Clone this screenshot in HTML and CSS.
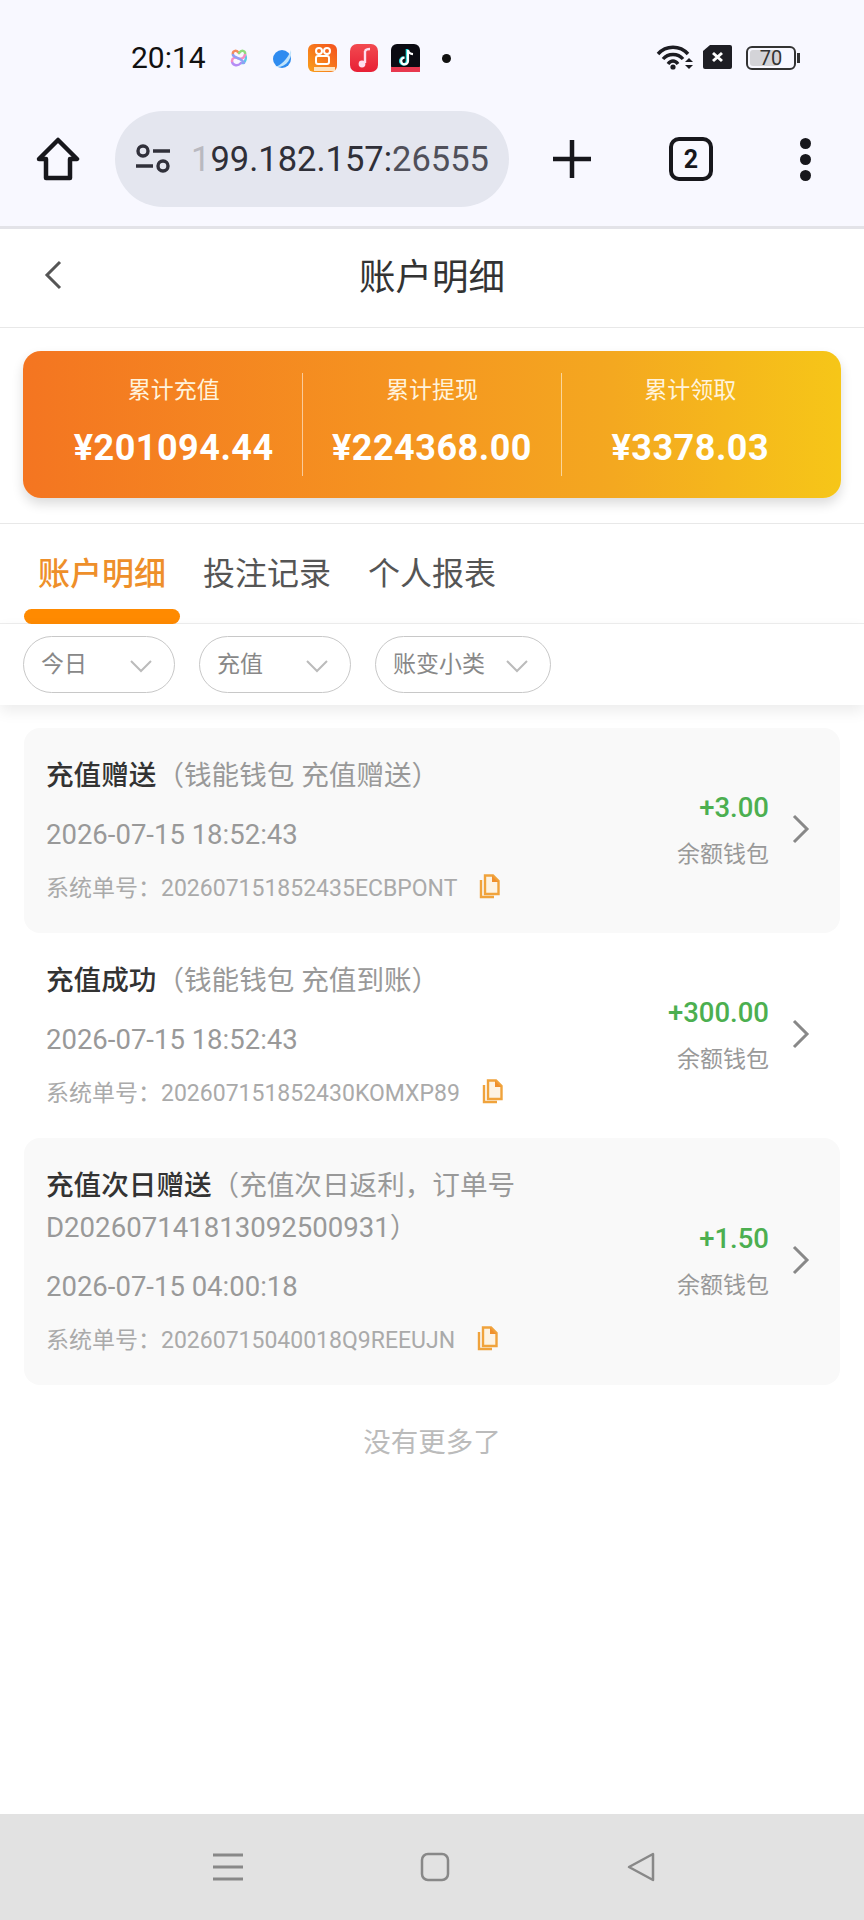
FILE: index.html
```html
<!DOCTYPE html>
<html lang="zh-CN">
<head>
    <meta charset="UTF-8">
    <meta name="viewport" content="width=device-width, initial-scale=1.0">
    <title>账户明细</title>
    <link rel="stylesheet" href="styles.css">
</head>
<body>
    <div class="browser">
        <div class="status-bar">
            <span class="clock">20:14</span>
            <svg class="app app-a" viewBox="0 0 20 20" fill="none" stroke-width="2.400" stroke-linecap="round">
                <path d="M4 7C3 3 7 1 10 5" stroke="#f48a5c"/>
                <path d="M10 5C13 1 17 3 16 7" stroke="#8fdc7a"/>
                <path d="M16 7C18 10 16 16 12 15" stroke="#5cc8e8"/>
                <path d="M12 15C8 19 3 17 3 13" stroke="#b58cf5"/>
                <path d="M3 13C3 10 6 9 8 10S14 12 16 7" stroke="#f78fc3"/>
                <path d="M4 7C5 10 13 10 15 15" stroke="#8f9ff5"/>
            </svg>
            <svg class="app app-b" viewBox="0 0 22 22">
                <circle cx="11" cy="11" r="9" fill="#2f8cf0"/>
                <path d="M4 19C9 18 17 11 20 2 21 10 16 20 4 19Z" fill="#bfe3fb"/>
            </svg>
            <svg class="app app-c" viewBox="0 0 29 28">
                <defs>
                    <linearGradient id="kuai" x1="0" y1="1" x2="1" y2="0">
                        <stop offset="0" stop-color="#f9a01b"/>
                        <stop offset="1" stop-color="#f4511e"/>
                    </linearGradient>
                </defs>
                <rect width="29" height="28" rx="6" fill="url(#kuai)"/>
                <g fill="none" stroke="#fff" stroke-width="2">
                    <circle cx="11" cy="7" r="3"/>
                    <circle cx="19" cy="7" r="3"/>
                    <rect x="8" y="12" width="13" height="8" rx="2"/>
                </g>
                <rect x="6" y="23" width="21" height="4" fill="#fde3c0"/>
            </svg>
            <svg class="app app-d" viewBox="0 0 28 28">
                <defs>
                    <linearGradient id="yinyue" x1="0" y1="0" x2="0" y2="1">
                        <stop offset="0" stop-color="#f24a50"/>
                        <stop offset="1" stop-color="#e81f35"/>
                    </linearGradient>
                </defs>
                <rect width="28" height="28" rx="7" fill="url(#yinyue)"/>
                <path d="M15 7v12" stroke="#fde" stroke-width="2.400" fill="none"/>
                <path d="M15 7c1-2 3-2 5-2" stroke="#fde" stroke-width="2.400" fill="none"/>
                <circle cx="12" cy="20" r="3.400" fill="#fde"/>
            </svg>
            <svg class="app app-e" viewBox="0 0 29 28">
                <rect width="29" height="28" rx="6" fill="#0b0b12"/>
                <path d="M16 5v12a3.400 3.400 0 1 1-3.400-3.400" fill="none" stroke="#25e0e0" stroke-width="2.600"/>
                <path d="M17 6c.6 2.500 2.400 4 5 4.200M17 6v11a3.400 3.400 0 1 1-3.400-3.400" fill="none" stroke="#fff" stroke-width="2.200"/>
                <rect y="23" width="29" height="5" fill="#e8384f"/>
            </svg>
            <span class="notice-dot"></span>
            <span class="status-right">
                <svg class="wifi" viewBox="0 0 38 26" fill="none" stroke="#1c1c22" stroke-width="3.400">
                    <path d="M2 10C10 1 24 1 32 10"/>
                    <path d="M7 15C12 9 22 9 27 15"/>
                    <path d="M12 20C15 16 19 16 22 20"/>
                    <circle cx="17" cy="23" r="2.600" fill="#1c1c22" stroke="none"/>
                    <path d="M29 18l4-4 4 4zM29 21h8l-4 4z" fill="#1c1c22" stroke="none"/>
                </svg>
                <svg class="sim" viewBox="0 0 29 24">
                    <path d="M7 0H27a2 2 0 0 1 2 2V22a2 2 0 0 1-2 2H2a2 2 0 0 1-2-2V6Z" fill="#1e1e24"/>
                    <path d="M10 8l9 8M19 8l-9 8" stroke="#fff" stroke-width="3"/>
                </svg>
                <span class="battery"><span class="battery-fill"></span><span class="battery-num">70</span></span>
                <span class="battery-nub"></span>
            </span>
        </div>
        <div class="toolbar">
            <svg class="home" viewBox="0 0 44 44" fill="none" stroke="#17171c" stroke-width="4.500" stroke-linejoin="round">
                <path d="M22 3 41 22H34V41H10V22H3Z"/>
            </svg>
            <div class="url-pill">
                <svg class="site-info" viewBox="0 0 36 30" fill="none" stroke="#30303a" stroke-width="3.400">
                    <circle cx="8" cy="7" r="5"/>
                    <path d="M18 7H35"/>
                    <path d="M1 22H18"/>
                    <circle cx="28" cy="22" r="5"/>
                </svg>
                <span class="url"><span class="url-fade">1</span>99.182.157:<span class="url-port">26555</span></span>
            </div>
            <svg class="plus" viewBox="0 0 40 40" stroke="#17171c" stroke-width="4.500">
                <path d="M20 1V39M1 20H39"/>
            </svg>
            <span class="tab-count">2</span>
            <span class="more"><i></i><i></i><i></i></span>
        </div>
    </div>

    <div class="page-head">
        <svg class="back" viewBox="0 0 18 30" fill="none" stroke="#555" stroke-width="3">
            <path d="M16 2 3 15 16 28"/>
        </svg>
        <h1>账户明细</h1>
    </div>

    <div class="summary">
        <div class="summary-card">
            <div class="summary-cell">
                <div class="summary-label">累计充值</div>
                <div class="summary-value">¥201094.44</div>
            </div>
            <div class="summary-cell">
                <div class="summary-label">累计提现</div>
                <div class="summary-value">¥224368.00</div>
            </div>
            <div class="summary-cell">
                <div class="summary-label">累计领取</div>
                <div class="summary-value">¥3378.03</div>
            </div>
        </div>
    </div>

    <div class="tabs">
        <div class="tab active">账户明细<span class="tab-bar"></span></div>
        <div class="tab">投注记录</div>
        <div class="tab">个人报表</div>
    </div>

    <div class="filters">
        <div class="filter"><span>今日</span>
            <svg viewBox="0 0 24 14" fill="none" stroke="#bbb" stroke-width="2"><path d="M2 2 12 12 22 2"/></svg>
        </div>
        <div class="filter"><span>充值</span>
            <svg viewBox="0 0 24 14" fill="none" stroke="#bbb" stroke-width="2"><path d="M2 2 12 12 22 2"/></svg>
        </div>
        <div class="filter filter-wide"><span>账变小类</span>
            <svg viewBox="0 0 24 14" fill="none" stroke="#bbb" stroke-width="2"><path d="M2 2 12 12 22 2"/></svg>
        </div>
    </div>

    <div class="records">
        <div class="record shaded">
            <div class="record-main">
                <div class="record-title"><b>充值赠送</b>（钱能钱包 充值赠送）</div>
                <div class="record-time">2026-07-15 18:52:43</div>
                <div class="record-order">系统单号：202607151852435ECBPONT
                    <svg class="copy" viewBox="0 0 21 25"><use href="#copy-icon"/></svg>
                </div>
            </div>
            <div class="record-side">
                <div class="record-amount">+3.00</div>
                <div class="record-wallet">余额钱包</div>
            </div>
            <svg class="record-arrow" viewBox="0 0 18 30" fill="none" stroke="#888" stroke-width="3"><path d="M2 2 15 15 2 28"/></svg>
        </div>
        <div class="record">
            <div class="record-main">
                <div class="record-title"><b>充值成功</b>（钱能钱包 充值到账）</div>
                <div class="record-time">2026-07-15 18:52:43</div>
                <div class="record-order">系统单号：202607151852430KOMXP89
                    <svg class="copy" viewBox="0 0 21 25"><use href="#copy-icon"/></svg>
                </div>
            </div>
            <div class="record-side">
                <div class="record-amount">+300.00</div>
                <div class="record-wallet">余额钱包</div>
            </div>
            <svg class="record-arrow" viewBox="0 0 18 30" fill="none" stroke="#888" stroke-width="3"><path d="M2 2 15 15 2 28"/></svg>
        </div>
        <div class="record shaded">
            <div class="record-main">
                <div class="record-title"><b>充值次日赠送</b>（充值次日返利，订单号D202607141813092500931）</div>
                <div class="record-time">2026-07-15 04:00:18</div>
                <div class="record-order">系统单号：20260715040018Q9REEUJN
                    <svg class="copy" viewBox="0 0 21 25"><use href="#copy-icon"/></svg>
                </div>
            </div>
            <div class="record-side">
                <div class="record-amount">+1.50</div>
                <div class="record-wallet">余额钱包</div>
            </div>
            <svg class="record-arrow" viewBox="0 0 18 30" fill="none" stroke="#888" stroke-width="3"><path d="M2 2 15 15 2 28"/></svg>
        </div>
        <div class="no-more">没有更多了</div>
    </div>

    <div class="nav-bar">
        <svg class="nav-menu" viewBox="0 0 30 28" stroke="#888" stroke-width="3"><path d="M0 2H30M0 14H30M0 26H30"/></svg>
        <svg class="nav-home" viewBox="0 0 30 30" fill="none" stroke="#888" stroke-width="2.500"><rect x="2" y="2" width="26" height="26" rx="6"/></svg>
        <svg class="nav-back" viewBox="0 0 28 30" fill="none" stroke="#888" stroke-width="2.500" stroke-linejoin="round"><path d="M26 2V28L2 15Z"/></svg>
    </div>

    <!-- 复制图标 -->
    <svg class="icon-defs" width="0" height="0">
        <symbol id="copy-icon" viewBox="0 0 21 25">
            <path d="M2 6V23H15" fill="none" stroke="#f0a33c" stroke-width="2.400"/>
            <path d="M6 1.500H14L19.500 7V20H6Z" fill="#fdf3e3" stroke="#f0a33c" stroke-width="2.400"/>
            <path d="M13 1.500 19.500 8H13Z" fill="#f0902c"/>
        </symbol>
    </svg>
</body>
</html>
```

FILE: styles.css
```css
* {
    box-sizing: border-box;
}
body {
    margin: 0;
    width: 864px;
    height: 1920px;
    display: flex;
    flex-direction: column;
    background-color: #fff;
    color: #333;
    font-family: Roboto, "Noto Sans CJK SC", sans-serif;
    overflow: hidden;
}

/* 浏览器顶部 */
.browser {
    height: 229px;
    background-color: #f8f8ff;
    border-bottom: 3px solid #e3e3e8;
    flex-shrink: 0;
}
.status-bar {
    height: 111px;
    padding: 44px 64px 0 131px;
    display: flex;
    align-items: flex-start;
}
.clock {
    width: 76px;
    height: 28px;
    line-height: 28px;
    font-size: 30px;
    color: #111;
    white-space: nowrap;
}
.app {
    display: block;
}
.app-a {
    width: 20px;
    height: 20px;
    margin: 4px 0 0 22px;
}
.app-b {
    width: 22px;
    height: 22px;
    margin: 4px 0 0 22px;
}
.app-c {
    width: 29px;
    height: 28px;
    margin-left: 15px;
}
.app-d {
    width: 28px;
    height: 28px;
    margin-left: 13px;
}
.app-e {
    width: 29px;
    height: 28px;
    margin-left: 13px;
}
.notice-dot {
    width: 9px;
    height: 9px;
    margin: 10px 0 0 22px;
    border-radius: 50%;
    background-color: #111;
}
.status-right {
    margin-left: auto;
    display: flex;
    align-items: flex-start;
}
.wifi {
    width: 38px;
    height: 26px;
}
.sim {
    width: 29px;
    height: 24px;
    margin: 1px 0 0 9px;
}
.battery {
    width: 50px;
    height: 24px;
    margin: 2px 0 0 14px;
    padding: 2px;
    display: flex;
    border: 2px solid #333;
    border-radius: 6px;
    background-color: #f8f8ff;
    position: relative;
}
.battery-fill {
    width: 70%;
    height: 100%;
    border-radius: 3px;
    background-color: #d4d4d8;
}
.battery-num {
    position: absolute;
    left: 0;
    right: 0;
    top: -2px;
    line-height: 24px;
    text-align: center;
    font-size: 20px;
    color: #333;
}
.battery-nub {
    width: 3px;
    height: 10px;
    margin: 9px 0 0 1px;
    background-color: #333;
}
.toolbar {
    height: 96px;
    padding-left: 36px;
    display: flex;
    align-items: center;
}
.home {
    width: 44px;
    height: 44px;
}
.url-pill {
    width: 394px;
    height: 96px;
    margin-left: 35px;
    padding-left: 20px;
    display: flex;
    align-items: center;
    border-radius: 48px;
    background-color: #e4e6ef;
    overflow: hidden;
}
.site-info {
    width: 36px;
    height: 30px;
    flex-shrink: 0;
}
.url {
    margin-left: 20px;
    font-size: 34.500px;
    color: #2f2f38;
    white-space: nowrap;
}
.url-fade {
    color: #b9b9c0;
}
.url-port {
    color: #50505a;
}
.plus {
    width: 40px;
    height: 40px;
    margin-left: 43px;
}
.tab-count {
    width: 44px;
    height: 44px;
    margin-left: 77px;
    display: flex;
    align-items: center;
    justify-content: center;
    border: 4px solid #17171c;
    border-radius: 10px;
    font-size: 25px;
    font-weight: 700;
    color: #17171c;
}
.more {
    margin-left: 87px;
    display: flex;
    flex-direction: column;
    gap: 5px;
}
.more i {
    width: 11px;
    height: 11px;
    border-radius: 50%;
    background-color: #17171c;
}

/* 页面标题 */
.page-head {
    height: 99px;
    flex-shrink: 0;
    padding-bottom: 8px;
    display: flex;
    align-items: center;
    justify-content: center;
    border-bottom: 1px solid #e8e8e8;
    position: relative;
}
.page-head h1 {
    margin: 0;
    font-size: 36.500px;
    font-weight: 400;
    color: #333;
}
.back {
    position: absolute;
    left: 44px;
    top: 31px;
    width: 18px;
    height: 30px;
}

/* 汇总卡片 */
.summary {
    height: 196px;
    flex-shrink: 0;
    padding: 23px 23px 0;
    border-bottom: 1px solid #e8e8e8;
}
.summary-card {
    height: 147px;
    padding: 22px;
    display: flex;
    border-radius: 18px;
    background: linear-gradient(90deg, #f47521 0%, #f59720 50%, #f4a820 72%, #f6c618 100%);
    box-shadow: 0 6px 12px rgba(0, 0, 0, 0.14);
    color: #fff;
}
.summary-cell {
    flex: 1;
    text-align: center;
    border-left: 1px solid rgba(255, 255, 255, 0.55);
}
.summary-cell:first-child {
    border-left: none;
}
.summary-label {
    height: 36px;
    line-height: 36px;
    font-size: 23px;
    color: #fff3dc;
}
.summary-value {
    margin-top: 17px;
    line-height: 44px;
    font-size: 36px;
    font-weight: 700;
    letter-spacing: 0.5px;
    white-space: nowrap;
}

/* 标签页 */
.tabs {
    height: 100px;
    flex-shrink: 0;
    padding: 0 24px;
    display: flex;
    gap: 9px;
    border-bottom: 1px solid #eee;
}
.tab {
    width: 156px;
    padding-top: 27px;
    line-height: 46px;
    text-align: center;
    font-size: 32px;
    color: #555;
    white-space: nowrap;
}
.tab.active {
    color: #ee8f2a;
    font-weight: 500;
}
.tab-bar {
    display: block;
    height: 15px;
    margin-top: 12px;
    border-radius: 8px;
    background-color: #ff8a00;
}

/* 筛选 */
.filters {
    height: 81px;
    flex-shrink: 0;
    padding: 12px 23px;
    display: flex;
    gap: 24px;
    background-color: #fff;
    box-shadow: 0 6px 14px rgba(0, 0, 0, 0.08);
    position: relative;
}
.filter {
    width: 152px;
    height: 57px;
    padding: 0 21px 0 17px;
    display: flex;
    align-items: center;
    justify-content: space-between;
    border: 1.500px solid #c8c8c8;
    border-radius: 29px;
    font-size: 23px;
    color: #888;
}
.filter span {
    margin-top: -6px;
}
.filter-wide {
    width: 176px;
}
.filter svg {
    width: 24px;
    height: 14px;
    margin-top: 3px;
}

/* 记录列表 */
.records {
    flex: 1;
    padding: 23px 24px 0;
}
.record {
    padding: 27px 30px 31px 22px;
    display: flex;
    align-items: center;
    border-radius: 16px;
}
.record.shaded {
    background-color: #f9f9f9;
}
.record-main {
    flex: 1;
    min-width: 0;
}
.record-title {
    width: 480px;
    line-height: 42px;
    font-size: 27.600px;
    color: #999;
    word-break: break-all;
}
.record-title b {
    font-weight: 500;
    color: #333;
}
.record-time {
    margin-top: 20px;
    line-height: 36px;
    font-size: 27.500px;
    color: #999;
}
.record-order {
    margin-top: 17px;
    height: 32px;
    display: flex;
    align-items: center;
    font-size: 23px;
    color: #aaa;
    white-space: nowrap;
}
.copy {
    width: 21px;
    height: 25px;
    margin-left: 22px;
}
.icon-defs {
    position: absolute;
}
.record-side {
    padding-top: 3px;
    text-align: right;
}
.record-amount {
    line-height: 36px;
    font-size: 27.500px;
    font-weight: 500;
    color: #4caf50;
}
.record-wallet {
    margin-top: 13px;
    line-height: 32px;
    font-size: 23px;
    color: #999;
}
.record-arrow {
    width: 18px;
    height: 30px;
    margin-left: 23px;
}
.no-more {
    margin-top: 35px;
    line-height: 46px;
    text-align: center;
    font-size: 27.500px;
    color: #bbb;
}

/* 底部导航 */
.nav-bar {
    height: 106px;
    flex-shrink: 0;
    padding-left: 213px;
    display: flex;
    align-items: center;
    background-color: #e2e2e2;
}
.nav-menu {
    width: 30px;
    height: 28px;
}
.nav-home {
    width: 30px;
    height: 30px;
    margin-left: 177px;
}
.nav-back {
    width: 28px;
    height: 30px;
    margin-left: 177px;
}
```
